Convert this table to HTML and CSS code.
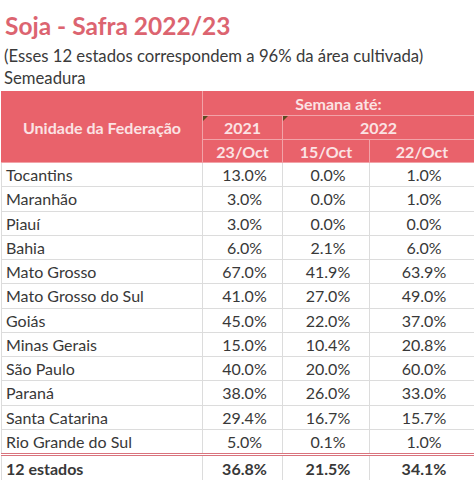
FILE: index.html
```html
<!DOCTYPE html>
<html lang="pt">
<head>
<meta charset="utf-8">
<link rel="stylesheet" href="styles.css">
</head>
<body>
<div class="page">
  <h1 class="title">Soja - Safra 2022/23</h1>
  <p class="sub">(Esses 12 estados correspondem a 96% da área cultivada)</p>
  <p class="sub2">Semeadura</p>
  <table class="tbl">
    <colgroup>
      <col class="c1"><col class="c2"><col class="c3"><col class="c4">
    </colgroup>
    <thead>
      <tr class="h1">
        <th rowspan="3" class="uf">Unidade da Federação</th>
        <th colspan="3">Semana até:</th>
      </tr>
      <tr class="h2">
        <th class="mark">2021</th>
        <th colspan="2" class="mark">2022</th>
      </tr>
      <tr class="h3">
        <th>23/Oct</th>
        <th>15/Oct</th>
        <th>22/Oct</th>
      </tr>
    </thead>
    <tbody>
      <tr><td>Tocantins</td><td>13.0%</td><td>0.0%</td><td>1.0%</td></tr>
      <tr><td>Maranhão</td><td>3.0%</td><td>0.0%</td><td>1.0%</td></tr>
      <tr><td>Piauí</td><td>3.0%</td><td>0.0%</td><td>0.0%</td></tr>
      <tr><td>Bahia</td><td>6.0%</td><td>2.1%</td><td>6.0%</td></tr>
      <tr><td>Mato Grosso</td><td>67.0%</td><td>41.9%</td><td>63.9%</td></tr>
      <tr><td>Mato Grosso do Sul</td><td>41.0%</td><td>27.0%</td><td>49.0%</td></tr>
      <tr><td>Goiás</td><td>45.0%</td><td>22.0%</td><td>37.0%</td></tr>
      <tr><td>Minas Gerais</td><td>15.0%</td><td>10.4%</td><td>20.8%</td></tr>
      <tr><td>São Paulo</td><td>40.0%</td><td>20.0%</td><td>60.0%</td></tr>
      <tr><td>Paraná</td><td>38.0%</td><td>26.0%</td><td>33.0%</td></tr>
      <tr><td>Santa Catarina</td><td>29.4%</td><td>16.7%</td><td>15.7%</td></tr>
      <tr><td>Rio Grande do Sul</td><td>5.0%</td><td>0.1%</td><td>1.0%</td></tr>
    </tbody>
    <tfoot>
      <tr><td>12 estados</td><td>36.8%</td><td>21.5%</td><td>34.1%</td></tr>
    </tfoot>
  </table>
</div>
</body>
</html>
```
FILE: styles.css
```css
html, body {
  margin: 0;
  padding: 0;
  background: #ffffff;
}
.page {
  font-family: Lato, "Open Sans", sans-serif;
  color: #383838;
  padding-top: 11px;
}
.title {
  margin: 0 0 0 5px;
  font-size: 24.5px;
  line-height: 30px;
  font-weight: 700;
  color: #dc6470;
}
.sub {
  margin: 4px 0 0 4px;
  font-size: 16.7px;
  line-height: 22px;
  color: #3a3a3a;
}
.sub2 {
  margin: 0 0 0 4px;
  font-size: 16.7px;
  line-height: 22px;
  color: #3a3a3a;
}
.tbl {
  margin-top: 2px;
  margin-left: 1px;
  border-collapse: collapse;
  width: 473px;
  table-layout: fixed;
  font-size: 16px;
}
.c1 { width: 201px; }
.c2 { width: 80px; }
.c3 { width: 87px; }
.c4 { width: 105px; }
.tbl th {
  background: #e9626b;
  color: #fbe3e4;
  font-weight: 700;
  border: 1px solid #f2a3a8;
  padding: 0;
  text-align: center;
  position: relative;
}
.tbl th.uf { border-left-color: #e9626b; }
.h1 th { height: 23px; border-top-color: #e9626b; }
.h2 th { height: 23px; }
.h3 th { height: 22px; }
.mark::before {
  content: "";
  position: absolute;
  left: 0;
  top: 0;
  border-top: 5px solid #5a4a20;
  border-right: 5px solid transparent;
}
.tbl td {
  border: 1px solid #dcdcdc;
  padding: 0 0 0 4px;
  height: 23.25px;
  text-align: center;
  white-space: nowrap;
}
.tbl td:first-child {
  text-align: left;
}
.tbl tbody tr:last-child td {
  border-bottom: 3px double #d9737d;
}
.tbl tfoot td {
  font-weight: 700;
  height: 24px;
  border-bottom: 2px solid #8a2a30;
}
```
